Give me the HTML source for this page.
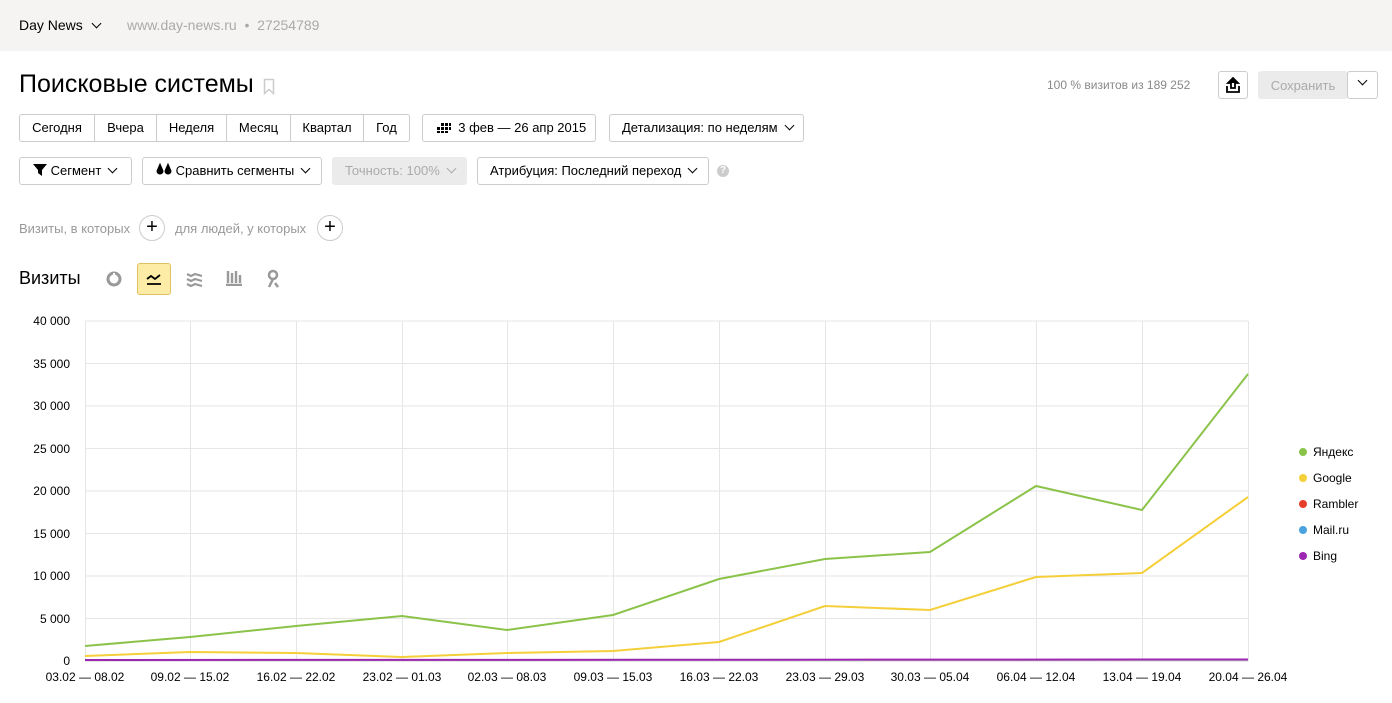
<!DOCTYPE html>
<html><head><meta charset="utf-8"><style>
body{margin:0;width:1392px;height:703px;background:#fff;font-family:"Liberation Sans",sans-serif;color:#000;position:relative;overflow:hidden}
.top{position:absolute;left:0;top:0;width:1392px;height:51px;background:#f5f4f2;font-size:14px}
.a{position:absolute}
.btn{position:absolute;height:26px;border:1px solid #ccc;border-radius:3px;box-sizing:border-box;font-size:13px;line-height:24px;background:#fff;white-space:nowrap}
.grp{display:flex}
.grp span{display:block;text-align:center;border-right:1px solid #ccc;height:26px;box-sizing:border-box}
.grp span:last-child{border-right:none}
.chev{display:inline-block;width:6px;height:6px;border-right:1.5px solid #000;border-bottom:1.5px solid #000;transform:rotate(45deg);margin-left:8px;position:relative;top:-3px}
.plus{position:absolute;width:26px;height:26px;border:1px solid #ccc;border-radius:50%;box-sizing:border-box;text-align:center;line-height:23px;font-size:20px}
</style></head><body>
<div class="top">
<div class="a" style="left:19px;top:17px">Day News <span class="chev" style="margin-left:6px"></span></div>
<div class="a" style="left:127px;top:17px;color:#aaa">www.day-news.ru &nbsp;•&nbsp; 27254789</div>
</div>
<div class="a" style="left:19px;top:70px;font-size:25px">Поисковые системы</div>
<svg class="a" style="left:263px;top:78px" width="12" height="17"><path d="M1.5 1.5h9v14l-4.5-4-4.5 4z" fill="none" stroke="#ccc" stroke-width="1.5"/></svg>
<div class="a" style="left:1047px;top:78px;font-size:12px;color:#888">100 % визитов из 189 252</div>
<div class="btn" style="left:1218px;top:71px;width:30px;height:28px"><svg width="28" height="26"><path d="M14 6l-5 5h3v5h4v-5h3z M8 14v6h12v-6" fill="none" stroke="#000" stroke-width="1.8"/><path d="M14 6l-5 5h10z" fill="#000"/></svg></div>
<div class="btn" style="left:1258px;top:71px;width:90px;height:28px;background:#ebebeb;border-color:#ebebeb;color:#aaa;text-align:center;line-height:27px">Сохранить</div>
<div class="btn" style="left:1347px;top:71px;width:31px;height:28px;text-align:center;line-height:22px"><span class="chev" style="margin:0"></span></div>

<div class="btn grp" style="left:19px;top:114px;width:391px;height:28px;line-height:26px"><span style="width:75px">Сегодня</span><span style="width:62px">Вчера</span><span style="width:70px">Неделя</span><span style="width:64px">Месяц</span><span style="width:73px">Квартал</span><span style="width:45px">Год</span></div>
<div class="btn" style="left:422px;top:114px;width:174px;height:28px;line-height:26px;padding-left:14px">
<svg width="14" height="10" style="vertical-align:-1px"><g fill="#000"><rect x="0" y="4" width="3" height="3"/><rect x="0" y="8" width="3" height="2"/><rect x="4" y="0" width="3" height="3"/><rect x="4" y="4" width="3" height="3"/><rect x="4" y="8" width="3" height="2"/><rect x="8" y="0" width="3" height="3"/><rect x="8" y="4" width="3" height="3"/><rect x="8" y="8" width="3" height="2"/><rect x="12" y="0" width="2" height="3"/><rect x="12" y="4" width="2" height="3"/></g></svg>&nbsp; 3 фев — 26 апр 2015</div>
<div class="btn" style="left:609px;top:114px;width:195px;height:28px;line-height:26px;padding-left:12px">Детализация: по неделям<span class="chev"></span></div>

<div class="btn" style="left:19px;top:157px;width:113px;height:28px;line-height:26px;padding-left:13px"><svg width="14" height="12" style="vertical-align:-1px"><path d="M0 0h14l-5 6v6l-4-3v-3z" fill="#000"/></svg> Сегмент<span class="chev"></span></div>
<div class="btn" style="left:142px;top:157px;width:180px;height:28px;line-height:26px;padding-left:13px"><svg width="16" height="13" style="vertical-align:-1px"><path d="M4 1l-3 7a3 3 0 006 0z M12 1l-3 7a3 3 0 006 0z" fill="#000" stroke="#000" stroke-width="1"/></svg> Сравнить сегменты<span class="chev"></span></div>
<div class="btn" style="left:332px;top:157px;width:135px;height:28px;line-height:26px;padding-left:12px;background:#ebebeb;border-color:#ebebeb;color:#aaa">Точность: 100%<span class="chev" style="border-color:#aaa"></span></div>
<div class="btn" style="left:477px;top:157px;width:232px;height:28px;line-height:26px;padding-left:12px">Атрибуция: Последний переход<span class="chev"></span></div>
<div class="a" style="left:717px;top:165px;width:12px;height:12px;border-radius:50%;background:#ccc;color:#fff;font-size:10px;text-align:center;line-height:12px;font-weight:bold">?</div>

<div class="a" style="left:19px;top:221px;font-size:13px;color:#999">Визиты, в которых</div>
<div class="plus" style="left:139px;top:215px">+</div>
<div class="a" style="left:175px;top:221px;font-size:13px;color:#999">для людей, у которых</div>
<div class="plus" style="left:317px;top:215px">+</div>

<div class="a" style="left:19px;top:268px;font-size:18px">Визиты</div>
<svg class="a" style="left:104px;top:270px" width="20" height="18"><circle cx="10" cy="9" r="6" fill="none" stroke="#999" stroke-width="3"/><path d="M10 9V3" stroke="#fff" stroke-width="2"/></svg>
<div class="a" style="left:137px;top:263px;width:34px;height:32px;background:#fdeca6;border:1px solid #e0c060;border-radius:3px;box-sizing:border-box"></div>
<svg class="a" style="left:145px;top:271px" width="18" height="16"><path d="M2 8l4-3 4 3 5-4 M2 13h14" stroke="#000" stroke-width="1.8" fill="none"/></svg>
<svg class="a" style="left:186px;top:271px" width="18" height="16"><path d="M1 3l4 2 4-2 7 2 M1 8l4 2 4-2 7 2 M1 13l4 2 4-2 7 2" stroke="#999" stroke-width="2.2" fill="none"/></svg>
<svg class="a" style="left:225px;top:270px" width="18" height="16"><path d="M3 1v12M7 3v10M11 1v12M15 5v8M1 15h16" stroke="#999" stroke-width="2.4" fill="none"/></svg>
<svg class="a" style="left:265px;top:269px" width="16" height="20"><circle cx="8" cy="6" r="4" fill="none" stroke="#999" stroke-width="2.5"/><path d="M8 10l-4 8 M10 14l3 4" stroke="#999" stroke-width="2.5"/></svg>

<svg class="a" style="left:0;top:300px" width="1392" height="403" font-family="Liberation Sans" font-size="12">
<g stroke="#e6e6e6" stroke-width="1">
<path d="M85 21H1248M85 63.5H1248M85 106H1248M85 148.5H1248M85 191H1248M85 233.5H1248M85 276H1248M85 318.5H1248"/>
<path d="M85.5 21V361M190.5 21V361M296.5 21V361M402.5 21V361M507.5 21V361M613.5 21V361M719.5 21V361M825.5 21V361M930.5 21V361M1036.5 21V361M1142.5 21V361M1248.5 21V361"/>
</g>
<path d="M85 361H1248" stroke="#ccc"/>
<g text-anchor="end" fill="#000"><text x="70" y="25">40 000</text><text x="70" y="68">35 000</text><text x="70" y="110">30 000</text><text x="70" y="153">25 000</text><text x="70" y="195">20 000</text><text x="70" y="238">15 000</text><text x="70" y="280">10 000</text><text x="70" y="323">5 000</text><text x="70" y="365">0</text></g>
<g text-anchor="middle"><text x="85" y="381">03.02 — 08.02</text><text x="190" y="381">09.02 — 15.02</text><text x="296" y="381">16.02 — 22.02</text><text x="402" y="381">23.02 — 01.03</text><text x="507" y="381">02.03 — 08.03</text><text x="613" y="381">09.03 — 15.03</text><text x="719" y="381">16.03 — 22.03</text><text x="825" y="381">23.03 — 29.03</text><text x="930" y="381">30.03 — 05.04</text><text x="1036" y="381">06.04 — 12.04</text><text x="1142" y="381">13.04 — 19.04</text><text x="1248" y="381">20.04 — 26.04</text></g>
<polyline fill="none" stroke="#8bc34a" stroke-width="2" points="85,346 190,337 296,326 402,316 507,330 613,315 719,279 825,259 930,252 1036,186 1142,210 1248,74"/>
<polyline fill="none" stroke="#f5cf3a" stroke-width="2" points="85,356 190,352 296,353 402,357 507,353 613,351 719,342 825,306 930,310 1036,277 1142,273 1248,197"/>
<polyline fill="none" stroke="#9c27b0" stroke-width="2" points="85,360 1248,359.5"/>
<g font-size="12"><circle cx="1303" cy="152" r="4" fill="#8bc34a"/><text x="1313" y="156">Яндекс</text>
<circle cx="1303" cy="178" r="4" fill="#f5cf3a"/><text x="1313" y="182">Google</text>
<circle cx="1303" cy="204" r="4" fill="#e53e2a"/><text x="1313" y="208">Rambler</text>
<circle cx="1303" cy="230" r="4" fill="#4aa3df"/><text x="1313" y="234">Mail.ru</text>
<circle cx="1303" cy="256" r="4" fill="#9c27b0"/><text x="1313" y="260">Bing</text></g>
</svg>
</body></html>
